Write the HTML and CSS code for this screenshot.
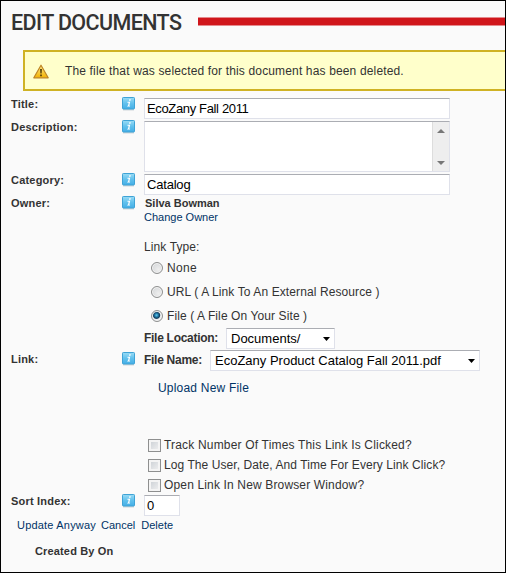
FILE: index.html
```html
<!DOCTYPE html>
<html lang="en">
<head>
<meta charset="utf-8">
<title>Edit Documents</title>
<link rel="stylesheet" href="styles.css">
</head>
<body>
<svg class="defs" width="0" height="0">
  <defs>
    <linearGradient id="blue" x1="0" y1="0" x2="0" y2="1"><stop offset="0" stop-color="#9adcf5"/><stop offset=".5" stop-color="#62c1ed"/><stop offset="1" stop-color="#43aee6"/></linearGradient>
    <linearGradient id="gold" x1="0" y1="0" x2="0" y2="1"><stop offset="0" stop-color="#ffe98a"/><stop offset="1" stop-color="#f2b200"/></linearGradient>
    <symbol id="info" viewBox="0 0 13 14">
      <rect x="1" y="12" width="11" height="1.5" fill="#cfd5d9"/>
      <rect x=".5" y=".5" width="12" height="11.5" rx=".8" fill="url(#blue)" stroke="#3fa3d6"/>
      <path d="M7.3 2.3h1.5l-.3 1.4H7zM5.5 4.8h2.7L7.3 8.8h.9l-.2.8H5.1l.3-.9h.6l.7-3h-1.3z" fill="#fff"/>
    </symbol>
  </defs>
</svg>
<div class="page">
  <header class="heading"><h1>EDIT DOCUMENTS</h1><div class="bar"></div></header>
  <div class="alert">
    <svg class="warn" viewBox="0 0 16 15"><path d="M8 1.2L15.2 13.8H.8z" fill="url(#gold)" stroke="#bd8424" stroke-width="1.2" stroke-linejoin="round"/><path d="M7.1 5h1.8l-.3 4.6H7.4zM7.2 10.6h1.6v1.7H7.2z" fill="#4c3908"/></svg>
    <p>The file that was selected for this document has been deleted.</p>
  </div>
  <form class="form">
    <div class="row title-row"><label>Title:</label><svg class="info"><use href="#info"/></svg><div class="input title">EcoZany Fall 2011</div></div>
    <div class="row desc-row"><label>Description:</label><svg class="info"><use href="#info"/></svg>
      <div class="input area"><div class="scroll">
        <svg viewBox="0 0 8 4"><path d="M0 4L4 0l4 4z" fill="#777"/></svg>
        <svg viewBox="0 0 8 4"><path d="M0 0h8L4 4z" fill="#777"/></svg>
      </div></div></div>
    <div class="row cat-row"><label>Category:</label><svg class="info"><use href="#info"/></svg><div class="input cat">Catalog</div></div>
    <div class="row owner-row"><label>Owner:</label><svg class="info"><use href="#info"/></svg><div class="owner"><b>Silva Bowman</b><a>Change Owner</a></div></div>
    <div class="row link-row"><label>Link:</label><svg class="info"><use href="#info"/></svg>
      <div class="link">
        <div class="type">Link Type:</div>
        <div class="option"><i class="radio"></i><span class="none">None</span></div>
        <div class="option"><i class="radio"></i><span class="url">URL ( A Link To An External Resource )</span></div>
        <div class="option"><i class="radio on"></i><span class="file">File ( A File On Your Site )</span></div>
        <div class="pick"><b class="loc">File Location:</b><div class="select folder"><span>Documents/</span><svg viewBox="0 0 7 4"><path d="M0 0h7L3.5 4z"/></svg></div></div>
        <div class="pick"><b class="name">File Name:</b><div class="select pdf"><span>EcoZany Product Catalog Fall 2011.pdf</span><svg viewBox="0 0 7 4"><path d="M0 0h7L3.5 4z"/></svg></div></div>
        <a class="upload">Upload New File</a>
        <div class="checks">
          <div class="check"><i class="box"></i><span class="c1">Track Number Of Times This Link Is Clicked?</span></div>
          <div class="check"><i class="box"></i><span class="c2">Log The User, Date, And Time For Every Link Click?</span></div>
          <div class="check"><i class="box"></i><span class="c3">Open Link In New Browser Window?</span></div>
        </div>
      </div></div>
    <div class="row sort-row"><label>Sort Index:</label><svg class="info"><use href="#info"/></svg><div class="input index">0</div></div>
  </form>
  <div class="actions"><a class="update">Update Anyway</a><a class="cancel">Cancel</a><a class="delete">Delete</a></div>
  <div class="created">Created By On</div>
</div>
</body>
</html>
```
FILE: styles.css
```css
* { box-sizing: border-box; }
body { margin: 0; font-family: "Liberation Sans", Arial, sans-serif; font-size: 12px; color: #333; }
.defs { display: block; }
.page { width: 506px; height: 573px; border: 1px solid #000; background: #fafafa; overflow: hidden; }
.heading { display: flex; height: 49px; padding-left: 10px; }
h1 { margin: 9px 0 0; width: 187px; font: 500 21.5px/26px Roboto, sans-serif; letter-spacing: -.6px; color: #333; white-space: nowrap; }
.bar { flex: 1; height: 9px; margin-top: 16px; background: #d0161b; border: solid #e58a8d; border-width: 1px 0; }
.alert { display: flex; height: 41px; margin-left: 22px; border: 2px solid #cfb224; border-right: 0; background: #ffffcb; }
.warn { width: 16px; height: 15px; margin: 12px 0 0 8px; }
.alert p { margin: 11px 0 0 16px; font-size: 12px; line-height: 16px; white-space: nowrap; letter-spacing: .15px; }
.form { padding: 6px 0 0 10px; }
.row { display: grid; grid-template-columns: 111px 22px 1fr; align-items: start; }
.title-row, .cat-row { height: 23px; }
.desc-row { height: 53px; }
.owner-row { height: 43px; }
.link-row { height: 255px; }
.sort-row { height: 22px; }
label { font-weight: bold; font-size: 11px; line-height: 14px; letter-spacing: .2px; white-space: nowrap; }
.info { width: 13px; height: 14px; }
.input, .select { background: #fff; border: 1px solid #dfe1ea; border-top-color: #abadb3; color: #000; white-space: nowrap; }
.input { width: 306px; height: 21px; margin-top: 1px; padding-left: 2px; font-size: 13px; line-height: 19px; }
.title { letter-spacing: -.35px; }
.area { height: 51px; display: flex; justify-content: flex-end; }
.scroll { width: 17px; background: #eee; border-left: 1px solid #ddd; display: flex; flex-direction: column; justify-content: space-between; align-items: center; padding: 7px 0 6px; }
.scroll svg { width: 8px; height: 4px; }
.cat { letter-spacing: -.2px; }
.owner { padding: 0 0 0 1px; font-size: 11px; line-height: 14px; }
.owner b, .owner a { display: block; letter-spacing: 0; }
.owner a { margin-left: -1px; }
a { color: #003366; white-space: nowrap; }
.link-row > label, .link-row > .info { margin-top: 113px; }
.type { line-height: 16px; height: 17px; letter-spacing: .1px; }
.option { display: flex; align-items: center; height: 24px; padding-left: 7px; gap: 4px; white-space: nowrap; }
.url, .file { letter-spacing: .1px; }
.none { letter-spacing: .3px; }
.radio { width: 12px; height: 12px; border: 1px solid #8e8f8f; border-radius: 50%; background: radial-gradient(circle at 65% 65%, #eee, #cfd2d5); box-shadow: inset 0 0 0 1px #f4f4f4; }
.radio.on { background: radial-gradient(circle at 45% 42%, #5ccdf0 0, #1d6d9b 25%, #123c59 40%, #e8ebed 52%); }
.pick { display: flex; height: 22px; }
.pick b { line-height: 21px; white-space: nowrap; letter-spacing: -.28px; }
.loc { width: 82px; }
.name { width: 66px; }
.select { height: 21px; display: flex; justify-content: space-between; align-items: center; padding: 0 4px; font-size: 13px; }
.select svg { width: 7px; height: 4px; }
.folder { width: 109px; }
.pdf { width: 270px; }
.upload { display: block; margin: 8px 0 0 14px; line-height: 16px; letter-spacing: .2px; }
.checks { padding: 39px 0 0 4px; }
.check { display: flex; align-items: center; height: 20px; gap: 3px; white-space: nowrap; }
.c1 { letter-spacing: .18px; }
.c2 { letter-spacing: .08px; }
.c3 { letter-spacing: .15px; }
.box { width: 13px; height: 13px; border: 1px solid #8e8f8f; background: linear-gradient(135deg, #c8cdd2, #f3f3f3); box-shadow: inset 0 0 0 2px #f4f4f4; }
.index { width: 36px; }
.actions { display: flex; gap: 6px; padding: 2px 0 0 16px; font-size: 11px; line-height: 14px; }
.update { letter-spacing: .2px; }
.cancel { margin-left: -1px; }
.created { margin: 12px 0 0 34px; font-size: 11px; line-height: 14px; font-weight: bold; letter-spacing: .15px; }
```
